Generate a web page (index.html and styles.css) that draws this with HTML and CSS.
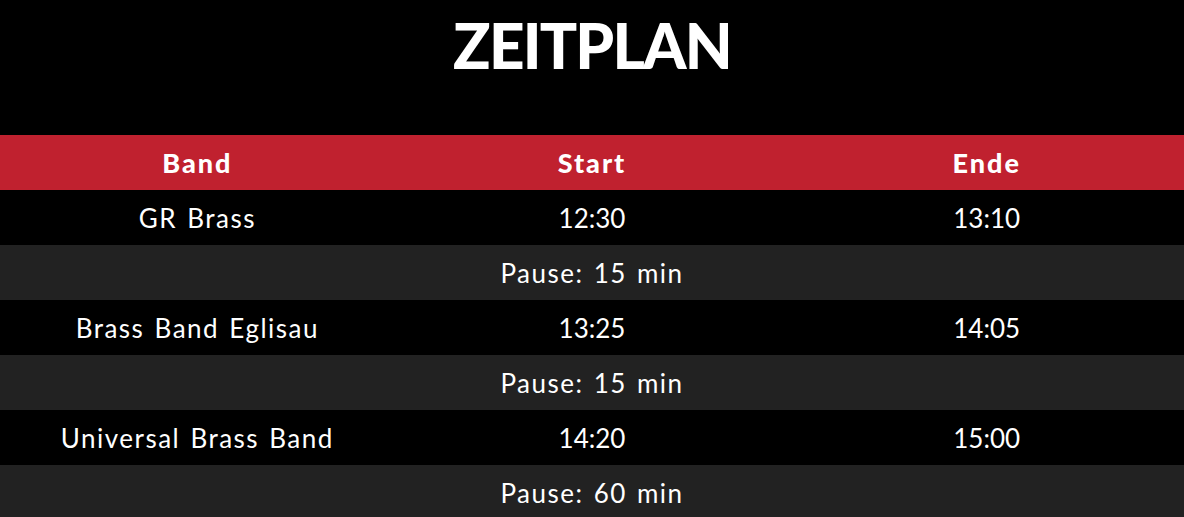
FILE: index.html
```html
<!DOCTYPE html>
<html lang="de">
<head>
<meta charset="utf-8">
<title>Zeitplan</title>
<link rel="stylesheet" href="styles.css">
</head>
<body>
<h1 class="title">ZEITPLAN</h1>
<table class="schedule">
  <thead>
    <tr class="head-row"><th>Band</th><th>Start</th><th>Ende</th></tr>
  </thead>
  <tbody>
    <tr class="band-row"><td>GR Brass</td><td class="time">12:30</td><td class="time">13:10</td></tr>
    <tr class="pause-row"><td colspan="3">Pause: 15 min</td></tr>
    <tr class="band-row"><td>Brass Band Eglisau</td><td class="time">13:25</td><td class="time">14:05</td></tr>
    <tr class="pause-row"><td colspan="3">Pause: 15 min</td></tr>
    <tr class="band-row"><td>Universal Brass Band</td><td class="time">14:20</td><td class="time">15:00</td></tr>
    <tr class="pause-row"><td colspan="3">Pause: 60 min</td></tr>
  </tbody>
</table>
</body>
</html>
```
FILE: styles.css
```css
html, body {
  margin: 0;
  padding: 0;
  background: #000;
  color: #fff;
  font-family: "Lato", "DejaVu Sans", sans-serif;
}
.title {
  margin: 0;
  height: 135px;
  padding-top: 7px;
  box-sizing: border-box;
  text-align: center;
  font-family: "Lato", sans-serif;
  font-weight: 900;
  font-size: 62px;
  line-height: 76px;
  letter-spacing: -1.8px;
}
.schedule {
  width: 100%;
  border-collapse: collapse;
  table-layout: fixed;
}
.schedule th,
.schedule td {
  height: 55px;
  padding: 0;
  text-align: center;
  vertical-align: middle;
  font-size: 26px;
  letter-spacing: 1.5px;
  word-spacing: 2px;
}
.schedule td.time {
  letter-spacing: 0;
}
.head-row th {
  background: #c0212f;
  font-size: 27px;
  font-weight: 900;
  letter-spacing: 2px;
}
.band-row td {
  background: #000;
}
.pause-row td {
  background: #222;
}
```
